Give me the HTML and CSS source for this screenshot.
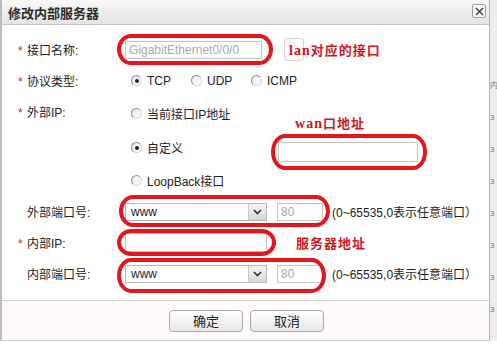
FILE: index.html
```html
<!DOCTYPE html>
<html lang="zh-CN">
<head>
  <meta charset="UTF-8" />
  <title>修改内部服务器</title>
  <link rel="stylesheet" href="styles.css">
</head>
<body>

<div class="page">
  <div class="dialog">
    <div class="titlebar">
      <span class="title">修改内部服务器</span>
      <span class="close">
        <svg width="11" height="11" viewBox="0 0 11 11"><path d="M2 2 L9 9 M9 2 L2 9" stroke="#333" stroke-width="1.3"/></svg>
      </span>
    </div>

    <div class="form">
      <div class="row">
        <div class="label"><span class="req">*</span>接口名称:</div>
        <div class="field">
          <span class="mark mark-name"><span class="input disabled w-name">GigabitEthernet0/0/0</span></span>
          <span class="ghost-btn"></span>
          <span class="note note-lan"><span class="latin">lan</span>对应的接口</span>
        </div>
      </div>

      <div class="row">
        <div class="label"><span class="req">*</span>协议类型:</div>
        <div class="field">
          <span class="opt"><span class="radio on"></span>TCP</span>
          <span class="opt"><span class="radio"></span>UDP</span>
          <span class="opt"><span class="radio"></span>ICMP</span>
        </div>
      </div>

      <div class="row tall">
        <div class="label label-top"><span class="req">*</span>外部IP:</div>
        <div class="field stack">
          <div class="line l1"><span class="radio"></span>当前接口IP地址</div>
          <div class="line l2">
            <span class="radio on"></span>自定义
            <span class="mark mark-custom">
              <span class="note note-wan"><span class="latin">wan</span>口地址</span>
              <span class="input w-custom"></span>
            </span>
          </div>
          <div class="line l3"><span class="radio"></span>LoopBack接口</div>
        </div>
      </div>

      <div class="row">
        <div class="label plain">外部端口号:</div>
        <div class="field">
          <span class="mark mark-port">
            <span class="select">www<span class="arrow"><svg width="9" height="6" viewBox="0 0 9 6"><path d="M1 1 L4.5 4.5 L8 1" fill="none" stroke="#333" stroke-width="1.6"/></svg></span></span>
            <span class="input disabled w-port">80</span>
          </span>
          <span class="hint">(0~65535,0表示任意端口）</span>
        </div>
      </div>

      <div class="row">
        <div class="label"><span class="req">*</span>内部IP:</div>
        <div class="field">
          <span class="mark mark-ip"><span class="input w-ip"></span></span>
          <span class="note note-server">服务器地址</span>
        </div>
      </div>

      <div class="row">
        <div class="label plain">内部端口号:</div>
        <div class="field">
          <span class="mark mark-port2">
            <span class="select">www<span class="arrow"><svg width="9" height="6" viewBox="0 0 9 6"><path d="M1 1 L4.5 4.5 L8 1" fill="none" stroke="#333" stroke-width="1.6"/></svg></span></span>
            <span class="input disabled w-port">80</span>
          </span>
          <span class="hint">(0~65535,0表示任意端口）</span>
        </div>
      </div>
    </div>

    <div class="footer">
      <button class="btn">确定</button>
      <button class="btn">取消</button>
    </div>
  </div>

  <div class="side">
    <span>内</span>
    <span>3</span>
    <span>3</span>
    <span>3</span>
    <span>3</span>
    <span>3</span>
    <span>3</span>
    <span>3</span>
  </div>
</div>

</body>
</html>
```

FILE: styles.css
```css
body {
  margin: 0;
  background: #fff;
  font-family: "Liberation Sans", "Noto Sans CJK SC", sans-serif;
  font-size: 12px;
  color: #222;
}

.page {
  display: flex;
  height: 341px;
}

.dialog {
  width: 487px;
  border-left: 2px solid #bdbdbd;
  border-right: 1px solid #b4b4b4;
  border-bottom: 1px solid #d0cbd0;
  display: flex;
  flex-direction: column;
  background: #fff;
}

.titlebar {
  height: 24px;
  border-bottom: 1px solid #c6c6c6;
  background: linear-gradient(#f8f8f8, #e4e4e4);
  display: flex;
  align-items: center;
  justify-content: space-between;
  padding: 0 3px 0 6px;
}

.title {
  font-weight: bold;
  font-size: 13px;
  color: #2b2b2b;
}

.close {
  width: 12px;
  height: 12px;
  border: 1px solid #9c9c9c;
  border-radius: 2px;
  background: #fafafa;
  display: flex;
  align-items: center;
  justify-content: center;
  margin-top: -2px;
}

.form {
  padding: 9px 0 11px;
  flex: 1;
}

.row {
  display: flex;
  align-items: center;
  height: 31px;
}

.row.tall {
  height: auto;
  align-items: flex-start;
}

.label {
  width: 123px;
  padding-left: 16px;
  box-sizing: border-box;
  color: #222;
  flex: none;
}

.label.plain {
  padding-left: 25px;
}

.label.label-top {
  height: 34px;
  line-height: 34px;
}

.req {
  display: inline-block;
  width: 9px;
  color: #c0282d;
}

.field {
  display: flex;
  align-items: center;
}

.stack {
  flex-direction: column;
  align-items: stretch;
}

.line {
  display: flex;
  align-items: center;
  height: 34px;
  padding-left: 6px;
}

.line.l3 {
  height: 32px;
}

.opt {
  display: flex;
  align-items: center;
  width: 60px;
  padding-left: 6px;
}

.opt + .opt {
  padding-left: 0;
}

.radio {
  width: 9px;
  height: 9px;
  border: 1px solid #8d8d8d;
  border-right-color: #d6d6d6;
  border-bottom-color: #d6d6d6;
  border-radius: 50%;
  background: linear-gradient(135deg, #e6e6e6, #fff);
  margin-right: 5px;
  position: relative;
  flex: none;
}

.radio.on::after {
  content: "";
  position: absolute;
  left: 3px;
  top: 3px;
  width: 4px;
  height: 4px;
  border-radius: 50%;
  background: #222;
}

.input {
  display: inline-block;
  box-sizing: border-box;
  height: 18px;
  line-height: 16px;
  border: 1px solid #c4c4c4;
  background: #fff;
  padding-left: 3px;
}

.input.disabled {
  color: #a8a8a8;
}

.w-name { width: 137px; }
.w-custom { width: 140px; height: 20px; }
.w-port { width: 46px; margin-left: 10px; }
.w-ip { width: 142px; height: 19px; }

.select {
  display: inline-flex;
  align-items: center;
  justify-content: space-between;
  box-sizing: border-box;
  width: 142px;
  height: 18px;
  border: 1px solid #b8b8b8;
  padding-left: 5px;
  background: #fff;
}

.arrow {
  width: 17px;
  height: 16px;
  border-left: 1px solid #c8c8c8;
  background: linear-gradient(#f4f4f4, #d8d8d8);
  display: flex;
  align-items: center;
  justify-content: center;
}

.mark {
  position: relative;
  display: inline-flex;
  align-items: center;
}

.mark::after {
  content: "";
  position: absolute;
  border: 4px solid #e3161e;
  border-radius: 14px / 50%;
}

.mark-name::after { left: -8px; right: -11px; top: -7px; bottom: -6px; }
.mark-custom { margin-left: 95px; margin-top: 9px; }
.mark-custom::after { left: -7px; right: -9px; top: -8px; bottom: -8px; }
.mark-port::after { left: -6px; right: -7px; top: -8px; bottom: -6px; }
.mark-ip::after { left: -8px; right: -9px; top: -4px; bottom: -4px; }
.mark-port2::after { left: -8px; right: -3px; top: -7px; bottom: -10px; }

.ghost-btn {
  width: 18px;
  height: 21px;
  margin-left: 22px;
  border: 1px solid #d6d6d6;
  border-radius: 3px;
  background: #fbfbfb;
}

.note {
  color: #d3161e;
  font-weight: bold;
  font-size: 13px;
  letter-spacing: 1px;
  white-space: nowrap;
}

.note .latin {
  font-family: "Liberation Serif", serif;
  font-size: 14px;
}

.note-lan {
  margin-left: -15px;
}

.note-wan {
  position: absolute;
  left: 17px;
  top: -29px;
}

.note-server {
  margin-left: 29px;
}

.hint {
  margin-left: 9px;
  white-space: nowrap;
}

.footer {
  height: 39px;
  border-top: 1px solid #d9d1d9;
  background: #fdf9fc;
  display: flex;
  align-items: center;
  justify-content: center;
  gap: 7px;
  padding-left: 2px;
}

.btn {
  width: 74px;
  height: 22px;
  border: 1px solid #a9a9a9;
  border-radius: 4px;
  background: linear-gradient(#ffffff, #e6e6e6);
  font-family: "Liberation Sans", "Noto Sans CJK SC", sans-serif;
  font-size: 13px;
  color: #222;
  padding: 0;
}

.side {
  flex: 1;
  background: #ededed;
  display: flex;
  flex-direction: column;
  padding-top: 70px;
  overflow: hidden;
  color: #777;
  font-size: 8px;
  line-height: 32px;
}
```
